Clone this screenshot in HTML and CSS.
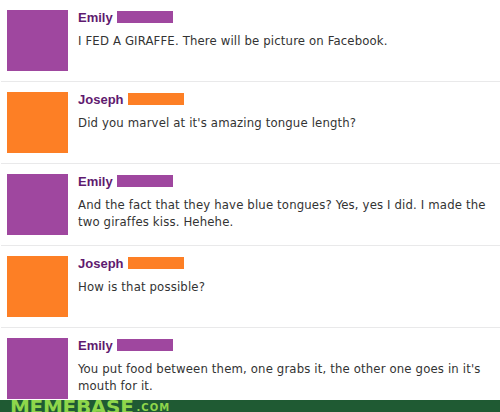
FILE: index.html
```html
<!DOCTYPE html>
<html>
<head>
<meta charset="utf-8">
<link rel="stylesheet" href="styles.css">
</head>
<body>
<div class="page">
  <div class="feed">
    <div class="post">
      <div class="avatar purple"></div>
      <div class="body">
        <div class="name">Emily <span class="bar purple"></span></div>
        <div class="msg">I FED A GIRAFFE. There will be picture on Facebook.</div>
      </div>
    </div>
    <div class="post">
      <div class="avatar orange"></div>
      <div class="body">
        <div class="name">Joseph <span class="bar orange"></span></div>
        <div class="msg">Did you marvel at it's amazing tongue length?</div>
      </div>
    </div>
    <div class="post">
      <div class="avatar purple"></div>
      <div class="body">
        <div class="name">Emily <span class="bar purple"></span></div>
        <div class="msg">And the fact that they have blue tongues? Yes, yes I did. I made the two giraffes kiss. Hehehe.</div>
      </div>
    </div>
    <div class="post">
      <div class="avatar orange"></div>
      <div class="body">
        <div class="name">Joseph <span class="bar orange"></span></div>
        <div class="msg">How is that possible?</div>
      </div>
    </div>
    <div class="post">
      <div class="avatar purple"></div>
      <div class="body">
        <div class="name">Emily <span class="bar purple"></span></div>
        <div class="msg">You put food between them, one grabs it, the other one goes in it's mouth for it.</div>
      </div>
    </div>
  </div>
  <div class="footer"><span class="logo">MEMEBASE</span><span class="com">.COM</span></div>
</div>
</body>
</html>
```
FILE: styles.css
```css
html, body {
  margin: 0;
  padding: 0;
  background: #ffffff;
}
.page {
  width: 500px;
  height: 412px;
  overflow: hidden;
  display: flex;
  flex-direction: column;
  font-family: "DejaVu Sans Condensed", "DejaVu Sans", sans-serif;
}
.feed {
  height: 400px;
  flex: none;
  overflow: hidden;
}
.post {
  display: flex;
  gap: 10px;
  padding: 10px 0 10px 7px;
  margin-left: 1px;
  border-bottom: 1px solid #e9e9ea;
}
.post .avatar {
  width: 61px;
  height: 61px;
  flex: none;
  margin-left: -1px;
}
.purple { background: #9f479f; }
.orange { background: #fd7f25; }
.body {
  padding-top: 1px;
  flex: 1;
}
.name {
  font-family: "Liberation Sans", Arial, sans-serif;
  font-weight: bold;
  font-size: 13px;
  line-height: 14px;
  color: #5f1a6f;
  display: flex;
  align-items: flex-start;
  gap: 4px;
}
.bar {
  display: inline-block;
  width: 56px;
  height: 12px;
}
.msg {
  margin-top: 7px;
  font-size: 13px;
  line-height: 17px;
  letter-spacing: 0.15px;
  color: #333333;
  padding-right: 6px;
}
.footer {
  height: 12px;
  flex: none;
  overflow: hidden;
  background: #1f5a33;
  display: flex;
  align-items: flex-start;
  padding-left: 10px;
}
.logo {
  font-family: "DejaVu Sans", sans-serif;
  font-weight: bold;
  font-size: 20px;
  line-height: 14px;
  color: #8ed64b;
  letter-spacing: -0.3px;
}
.com {
  font-family: "DejaVu Sans", sans-serif;
  font-weight: bold;
  font-size: 10px;
  line-height: 12px;
  color: #8ed64b;
  letter-spacing: 1px;
  margin-left: 3px;
  margin-top: 2px;
}
```
